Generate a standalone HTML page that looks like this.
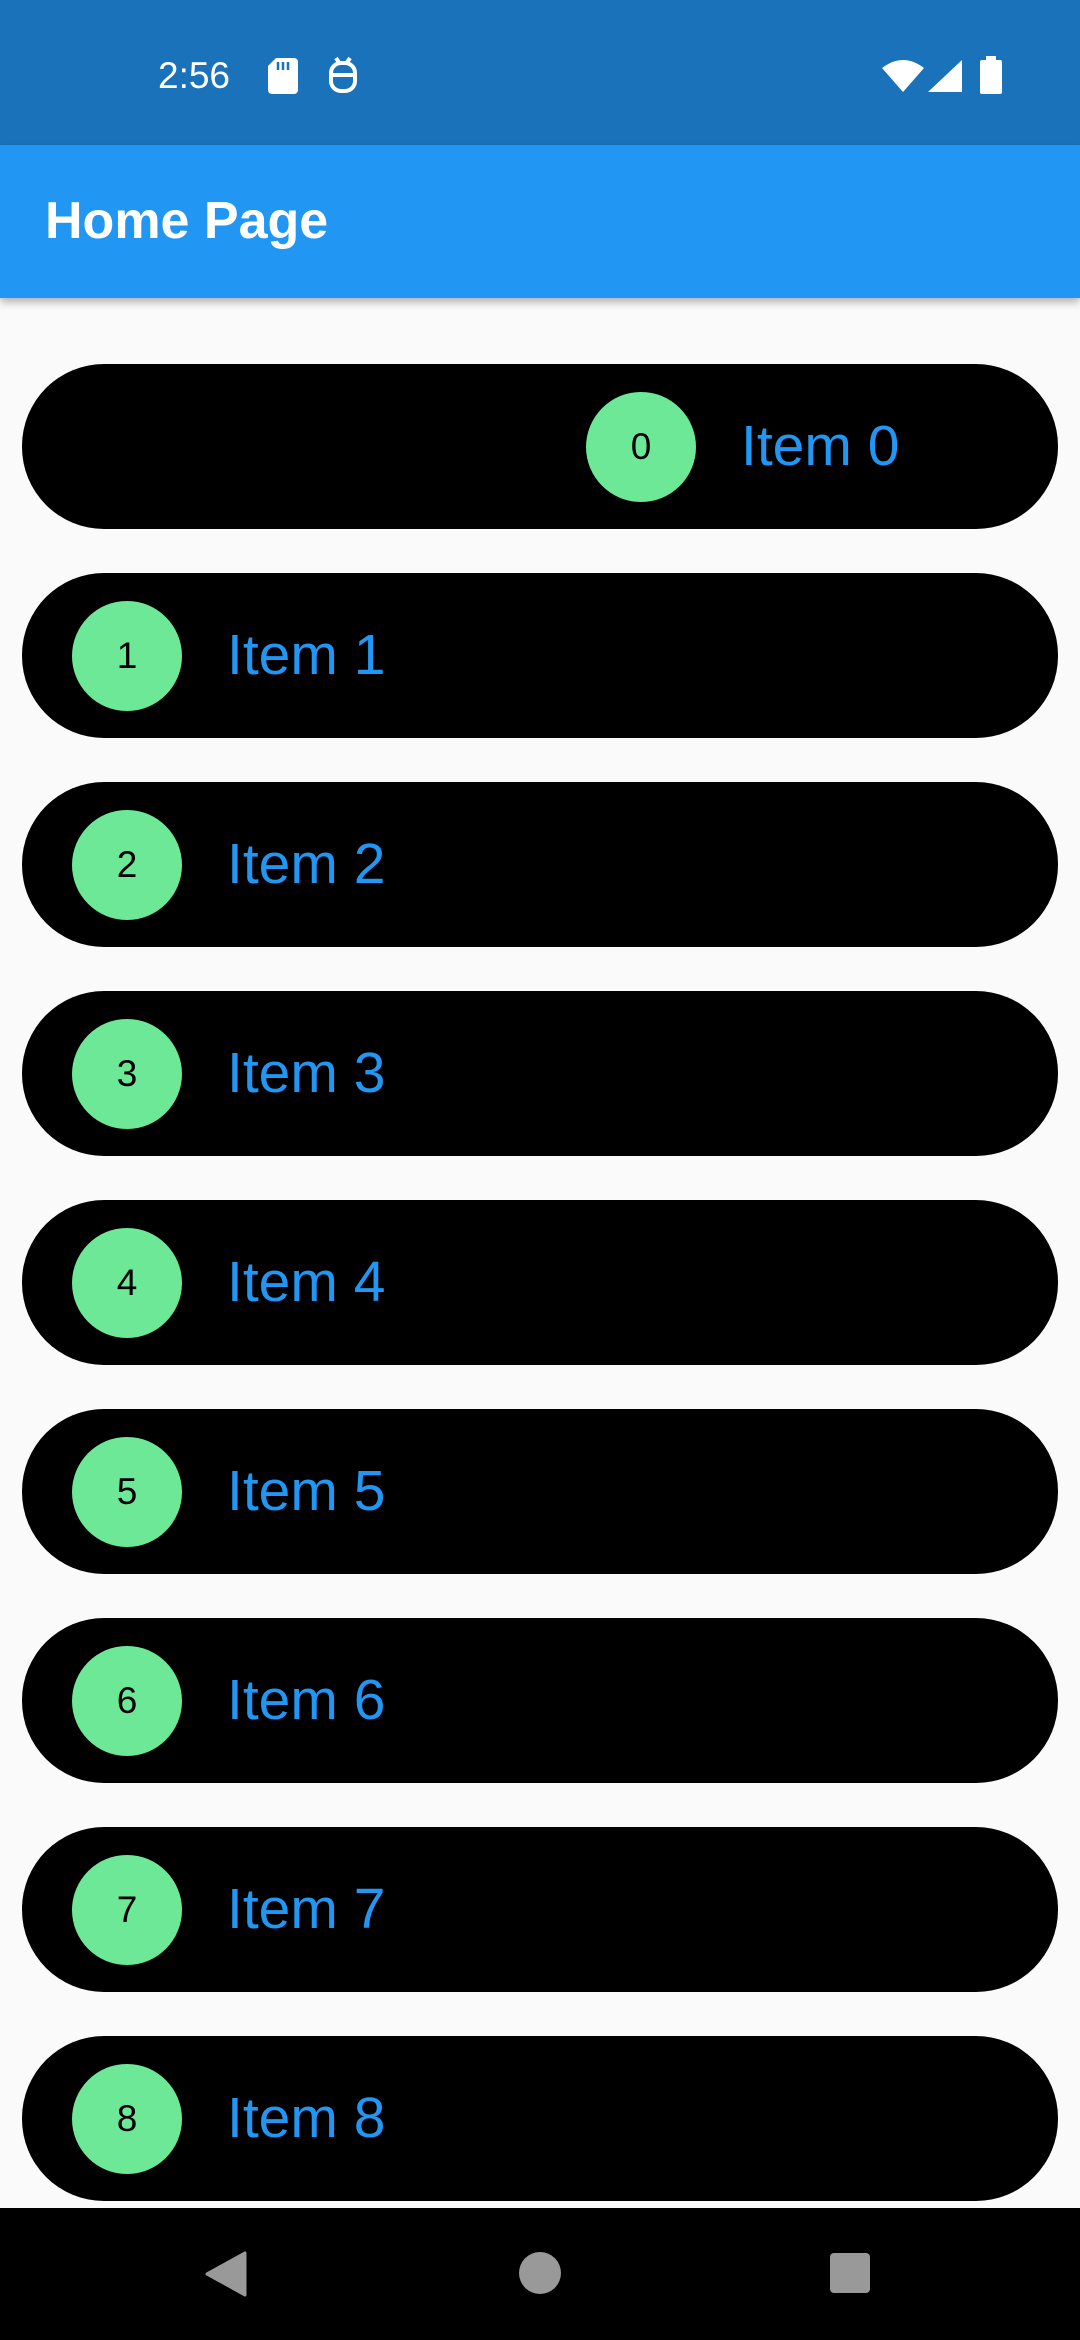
<!DOCTYPE html>
<html><head><meta charset="utf-8"><style>
*{margin:0;padding:0;box-sizing:border-box}
body{width:1080px;height:2340px;background:#fafafa;font-family:"Liberation Sans",Roboto,sans-serif;position:relative;overflow:hidden}
.sb{position:absolute;top:0;left:0;width:1080px;height:145px;background:#1a73ba}
.ab{position:absolute;top:145px;left:0;width:1080px;height:153px;background:#2196f3;box-shadow:0 4px 8px rgba(0,0,0,.3)}
.ab span{position:absolute;left:45px;top:46px;color:#fff;font-size:52px;font-weight:bold}
.pill{position:absolute;left:22px;width:1036px;height:165px;background:#000;border-radius:82px}
.c{position:absolute;top:28px;width:110px;height:110px;border-radius:50%;background:#6ce896;color:#000;font-size:37px;text-align:center;line-height:110px}
.t{position:absolute;top:50px;color:#2196f3;font-size:57px;line-height:64px}
.nav{position:absolute;top:2208px;left:0;width:1080px;height:132px;background:#000}
</style></head><body>
<div class="sb">
<span style="position:absolute;left:158px;top:55px;color:#fff;font-size:37px">2:56</span>
<svg style="position:absolute;left:268px;top:58px" width="30" height="36" viewBox="0 0 30 36"><path d="M8 0h18a4 4 0 0 1 4 4v28a4 4 0 0 1-4 4H4a4 4 0 0 1-4-4V8z" fill="#fff"/><path d="M10 4v8M15 4v8M20 4v8" stroke="#1a73ba" stroke-width="2.5"/></svg>
<svg style="position:absolute;left:328px;top:56px" width="30" height="38" viewBox="0 0 30 38"><rect x="3" y="7" width="24" height="28" rx="10" fill="none" stroke="#fff" stroke-width="4"/><path d="M3 19h24M8 2l4 6M22 2l-4 6" stroke="#fff" stroke-width="4"/></svg>
<svg style="position:absolute;left:882px;top:60px" width="42" height="32" viewBox="0 0 42 32"><path d="M0 8Q21-8 42 8L21 32z" fill="#fff"/></svg>
<svg style="position:absolute;left:928px;top:60px" width="34" height="32" viewBox="0 0 34 32"><path d="M34 0V32H0z" fill="#fff"/></svg>
<svg style="position:absolute;left:980px;top:56px" width="22" height="38" viewBox="0 0 22 38"><rect x="6" y="0" width="10" height="5" fill="#fff"/><rect x="0" y="4" width="22" height="34" rx="2" fill="#fff"/></svg>
</div>
<div class="ab"><span>Home Page</span></div>

<div class="pill" style="top:364px"><div class="c" style="left:564px">0</div><div class="t" style="left:719px">Item 0</div></div>
<div class="pill" style="top:573px"><div class="c" style="left:50px">1</div><div class="t" style="left:205px">Item 1</div></div>
<div class="pill" style="top:782px"><div class="c" style="left:50px">2</div><div class="t" style="left:205px">Item 2</div></div>
<div class="pill" style="top:991px"><div class="c" style="left:50px">3</div><div class="t" style="left:205px">Item 3</div></div>
<div class="pill" style="top:1200px"><div class="c" style="left:50px">4</div><div class="t" style="left:205px">Item 4</div></div>
<div class="pill" style="top:1409px"><div class="c" style="left:50px">5</div><div class="t" style="left:205px">Item 5</div></div>
<div class="pill" style="top:1618px"><div class="c" style="left:50px">6</div><div class="t" style="left:205px">Item 6</div></div>
<div class="pill" style="top:1827px"><div class="c" style="left:50px">7</div><div class="t" style="left:205px">Item 7</div></div>
<div class="pill" style="top:2036px"><div class="c" style="left:50px">8</div><div class="t" style="left:205px">Item 8</div></div>

<div class="nav">
<svg style="position:absolute;left:205px;top:43px" width="42" height="46" viewBox="0 0 42 46"><path d="M40 2V44L2 23z" fill="#999" stroke="#999" stroke-width="3" stroke-linejoin="round"/></svg>
<div style="position:absolute;left:519px;top:44px;width:42px;height:42px;border-radius:50%;background:#999"></div>
<div style="position:absolute;left:830px;top:45px;width:40px;height:40px;border-radius:4px;background:#999"></div>
</div>
</body></html>
